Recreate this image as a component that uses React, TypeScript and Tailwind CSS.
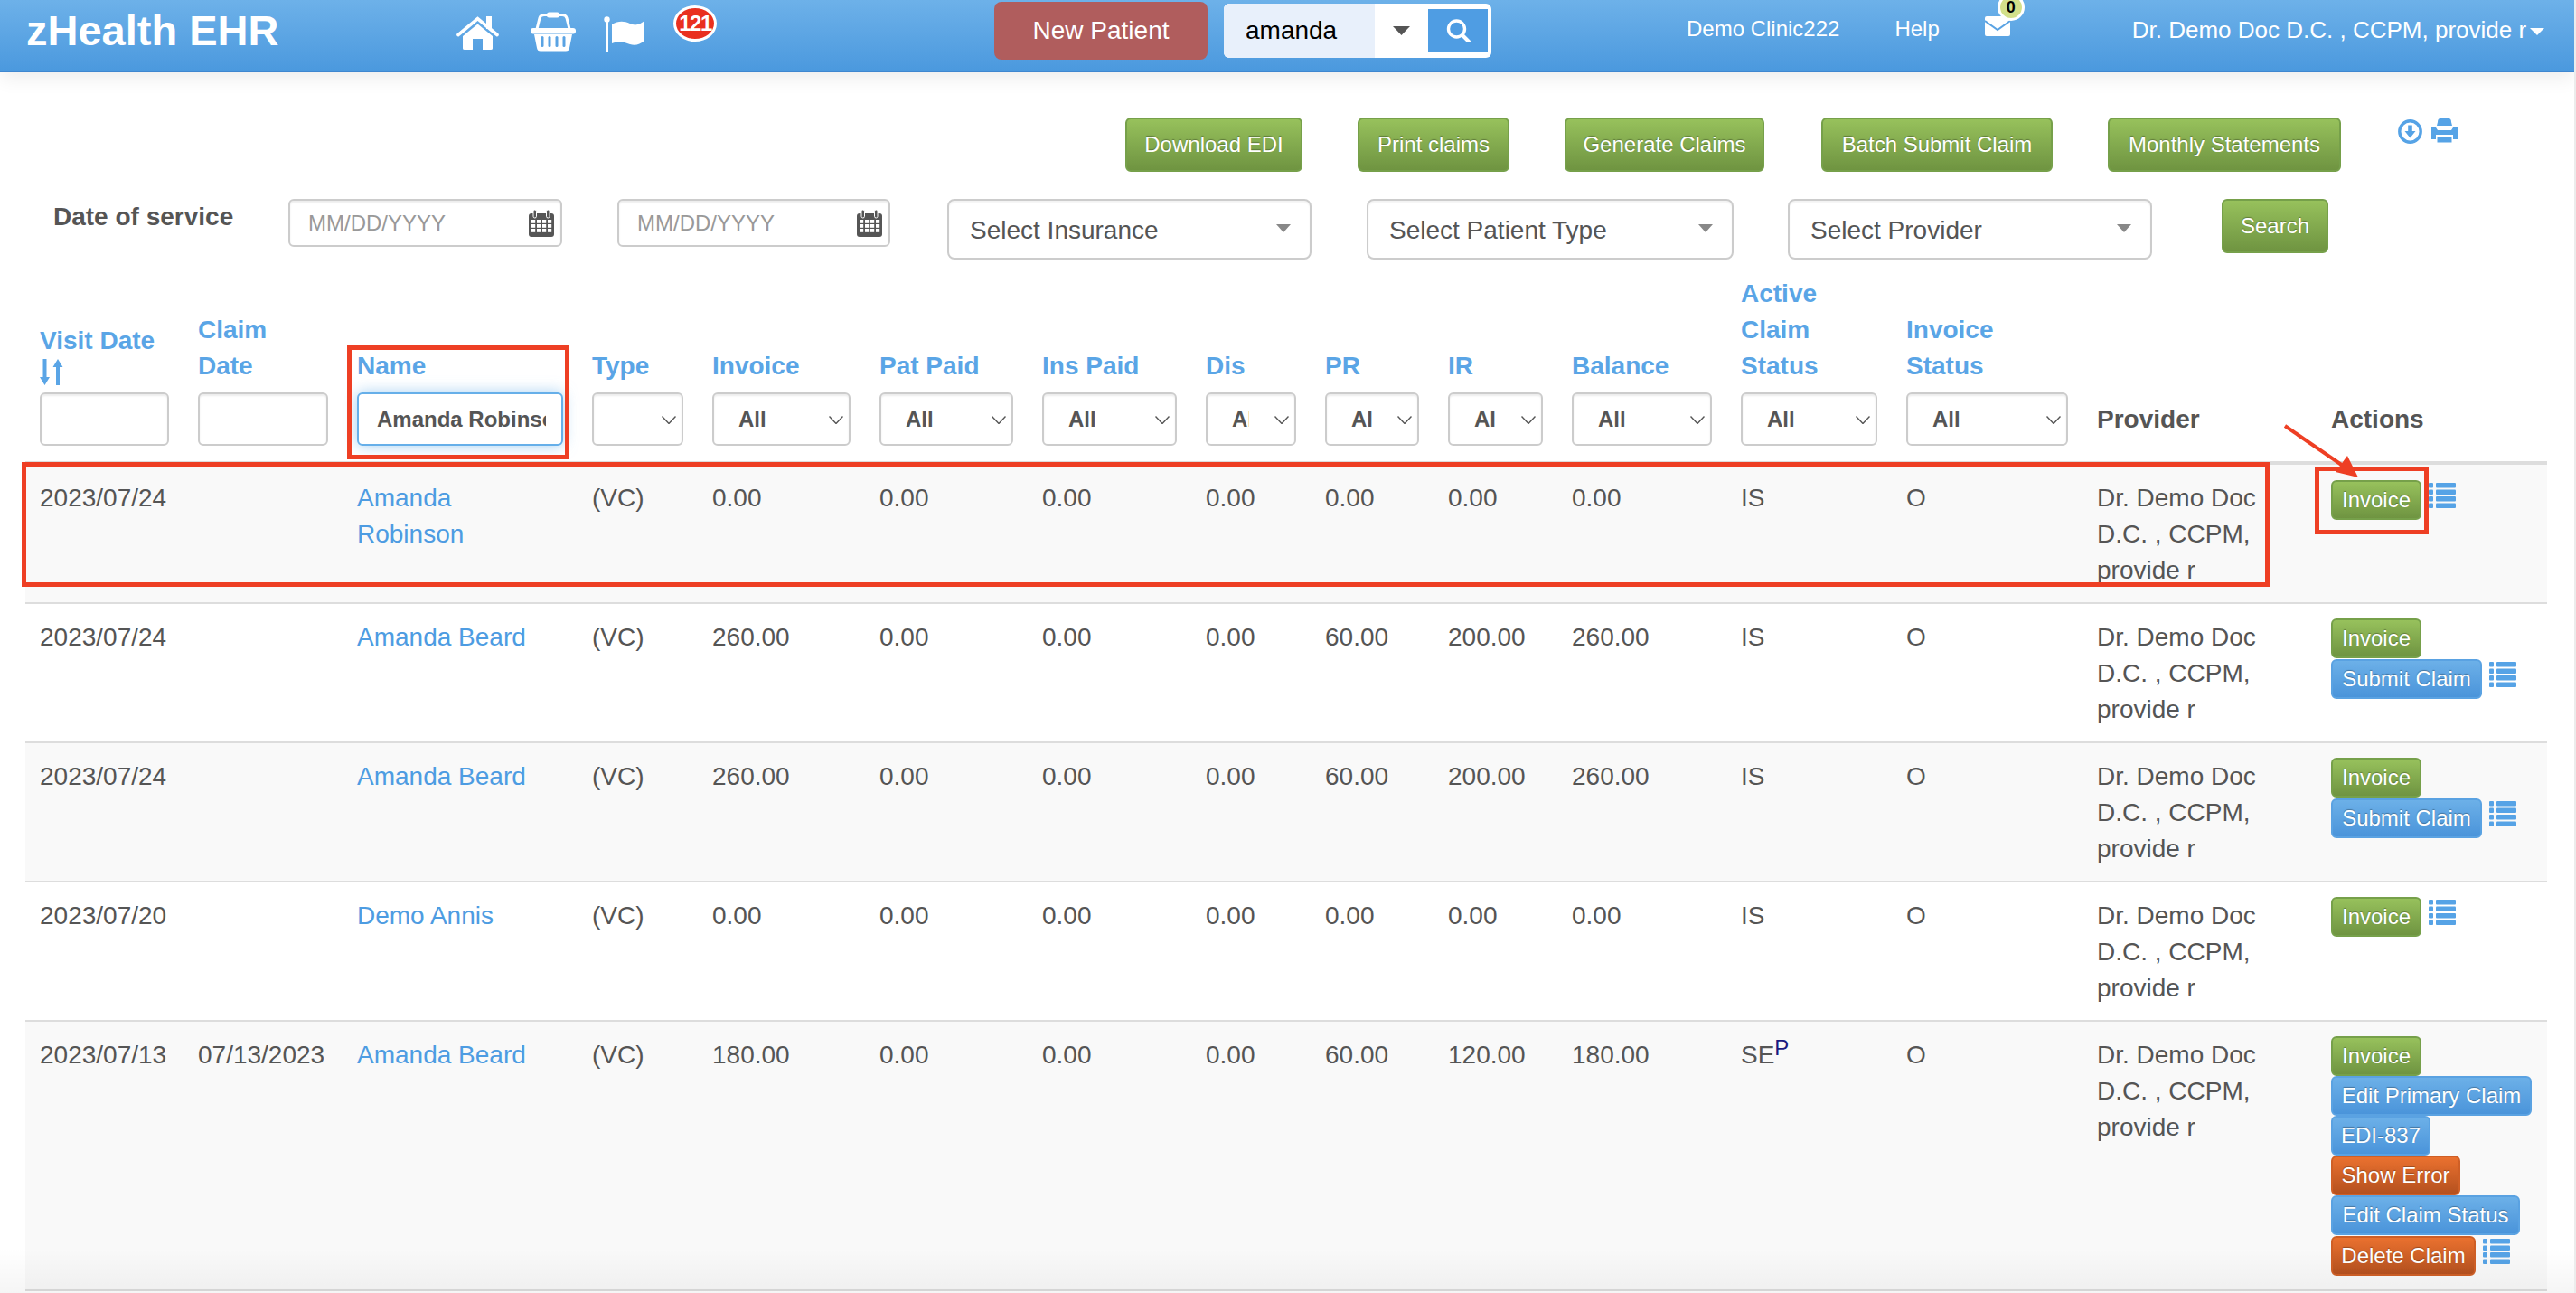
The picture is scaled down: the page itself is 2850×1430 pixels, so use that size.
import React from 'react';

const green = 'bg-linear-to-b from-[#97c15c] to-[#6f9441] border-[#76a04a]';
const blue = 'bg-linear-to-b from-[#6cb0e8] to-[#4a94da] border-[#5aa2e2]';
const orange = 'bg-linear-to-b from-[#ea712f] to-[#b5511f] border-[#cf5f26]';

function Btn({ color, label, className = '' }: { color: string; label: string; className?: string }) {
  return (
    <button
      className={`shrink-0 rounded-[6px] border-2 text-white text-[24px] leading-none whitespace-nowrap [text-shadow:0_-1px_1px_rgba(0,0,0,0.3)] ${color} ${className}`}
    >
      {label}
    </button>
  );
}

function ListIcon() {
  return (
    <svg width="30" height="28" viewBox="0 0 30 28" fill="#56a3e6" className="shrink-0 mt-[3px]">
      <rect x="0" y="0" width="5" height="5.5" rx="1" />
      <rect x="8" y="0" width="22" height="5.5" rx="1" />
      <rect x="0" y="7.5" width="5" height="5.5" rx="1" />
      <rect x="8" y="7.5" width="22" height="5.5" rx="1" />
      <rect x="0" y="15" width="5" height="5.5" rx="1" />
      <rect x="8" y="15" width="22" height="5.5" rx="1" />
      <rect x="0" y="22.5" width="5" height="5.5" rx="1" />
      <rect x="8" y="22.5" width="22" height="5.5" rx="1" />
    </svg>
  );
}

function CalendarIcon() {
  return (
    <svg width="28" height="30" viewBox="0 0 28 30" className="absolute right-[9px] top-[12px]">
      <rect x="0" y="4" width="28" height="26" rx="3" fill="#555" />
      <rect x="5" y="0" width="3.5" height="9" rx="1.7" fill="#555" stroke="#fff" strokeWidth="1" />
      <rect x="19.5" y="0" width="3.5" height="9" rx="1.7" fill="#555" stroke="#fff" strokeWidth="1" />
      <g fill="#fff">
        {[3, 9, 15, 21].map((x) =>
          [11, 16, 21].map((y) => <rect key={`${x}-${y}`} x={x} y={y} width="4.2" height="3.8" />),
        )}
      </g>
    </svg>
  );
}

function DateInput({ className = '' }: { className?: string }) {
  return (
    <div className={`relative h-[53px] shrink-0 ${className}`}>
      <input
        placeholder="MM/DD/YYYY"
        className="w-full h-full border-2 border-[#ccc] rounded-[6px] pl-[20px] text-[24px] text-[#555] placeholder:text-[#999] shadow-[inset_0_2px_2px_rgba(0,0,0,0.075)] outline-none"
      />
      <CalendarIcon />
    </div>
  );
}

function FakeSelect({ label, className = '' }: { label: string; className?: string }) {
  return (
    <div
      className={`h-[67px] shrink-0 flex items-center justify-between border-2 border-[#ccc] rounded-[8px] pl-[23px] pr-[21px] text-[28px] text-[#555] shadow-[inset_0_2px_2px_rgba(0,0,0,0.05)] ${className}`}
    >
      <span className="pt-[2px]">{label}</span>
      <svg width="16" height="9" viewBox="0 0 16 9" className="mb-[2px]">
        <path d="M0 0H16L8 9Z" fill="#888" />
      </svg>
    </div>
  );
}

function FilterSelect({ value = 'All' }: { value?: string }) {
  return (
    <div className="relative h-[59px] w-full">
      <select
        defaultValue={value}
        className="appearance-none w-full h-full bg-white border-2 border-[#ccc] rounded-[6px] pl-[27px] pr-[50px] text-[24px] font-bold text-[#555] shadow-[inset_0_2px_2px_rgba(0,0,0,0.075)] outline-none"
      >
        <option value={value}>{value}</option>
      </select>
      <svg width="16" height="9" viewBox="0 0 16 9" className="absolute right-[8px] top-[26px] pointer-events-none">
        <path d="M0.5 0.5L8 8.5L15.5 0.5" fill="none" stroke="#555" strokeWidth="1.4" />
      </svg>
    </div>
  );
}

function TextFilter({ value, focused }: { value?: string; focused?: boolean }) {
  return (
    <input
      readOnly
      value={value ?? ''}
      className={`block w-full h-[59px] bg-white rounded-[6px] border-2 pl-[20px] pr-[17px] text-[24px] font-bold text-[#555] outline-none ${
        focused
          ? 'border-[#66afe9] shadow-[0_0_16px_rgba(102,175,233,0.6)]'
          : 'border-[#ccc] shadow-[inset_0_2px_2px_rgba(0,0,0,0.075)]'
      }`}
    />
  );
}

function HeadLabel({ lines }: { lines: string[] }) {
  return (
    <div className="mb-[9px] text-[#5aa5e6] font-bold text-[28px] leading-[40px]">
      {lines.map((l) => (
        <div key={l}>{l}</div>
      ))}
    </div>
  );
}

const selectCols = [
  { lines: ['Type'], value: '' },
  { lines: ['Invoice'] },
  { lines: ['Pat Paid'] },
  { lines: ['Ins Paid'] },
  { lines: ['Dis'] },
  { lines: ['PR'] },
  { lines: ['IR'] },
  { lines: ['Balance'] },
  { lines: ['Active', 'Claim', 'Status'] },
  { lines: ['Invoice', 'Status'] },
];

type Action = { label: string; color: string; w: string };
const invoice: Action = { label: 'Invoice', color: green, w: 'w-[100px]' };
const submit: Action = { label: 'Submit Claim', color: blue, w: 'w-[167px]' };

type Row = {
  visit: string;
  claim: string;
  name: string;
  inv: string;
  pr: string;
  ir: string;
  bal: string;
  status: string;
  sup?: boolean;
  actions: Action[];
};

const rows: Row[] = [
  { visit: '2023/07/24', claim: '', name: 'Amanda Robinson', inv: '0.00', pr: '0.00', ir: '0.00', bal: '0.00', status: 'IS', actions: [invoice] },
  { visit: '2023/07/24', claim: '', name: 'Amanda Beard', inv: '260.00', pr: '60.00', ir: '200.00', bal: '260.00', status: 'IS', actions: [invoice, submit] },
  { visit: '2023/07/24', claim: '', name: 'Amanda Beard', inv: '260.00', pr: '60.00', ir: '200.00', bal: '260.00', status: 'IS', actions: [invoice, submit] },
  { visit: '2023/07/20', claim: '', name: 'Demo Annis', inv: '0.00', pr: '0.00', ir: '0.00', bal: '0.00', status: 'IS', actions: [invoice] },
  {
    visit: '2023/07/13',
    claim: '07/13/2023',
    name: 'Amanda Beard',
    inv: '180.00',
    pr: '60.00',
    ir: '120.00',
    bal: '180.00',
    status: 'SE',
    sup: true,
    actions: [
      invoice,
      { label: 'Edit Primary Claim', color: blue, w: 'w-[222px]' },
      { label: 'EDI-837', color: blue, w: 'w-[110px]' },
      { label: 'Show Error', color: orange, w: 'w-[143px]' },
      { label: 'Edit Claim Status', color: blue, w: 'w-[209px]' },
      { label: 'Delete Claim', color: orange, w: 'w-[160px]' },
    ],
  },
];

function Nav() {
  return (
    <header className="h-[80px] flex bg-linear-to-b from-[#6db1e9] to-[#4b99de] border-b-2 border-[#3f87d0] shadow-[0_6px_20px_rgba(0,0,0,0.08)] text-white">
      <div className="w-[505px] shrink-0 pl-[29px] pt-[9px] text-[47px] font-bold leading-[50px]">zHealth EHR</div>
      <svg width="47" height="39" viewBox="0 0 47 39" className="mt-[17px] shrink-0">
        <rect x="33" y="1" width="6" height="14" fill="#fff" />
        <path d="M2 21.5L23.5 3.5L45 21.5" fill="none" stroke="#fff" strokeWidth="3.6" strokeLinecap="round" />
        <path d="M23.5 9.5L40 23V36.5Q40 38 38 38H29V26H18V38H9Q7 38 7 36.5V23Z" fill="#fff" />
      </svg>
      <svg width="50" height="44" viewBox="0 0 50 44" className="ml-[35px] mt-[13px] shrink-0">
        <path d="M7 19L10 7Q11 3.5 15 3.5H35Q39 3.5 40 7L43 19" fill="none" stroke="#fff" strokeWidth="3" />
        <rect x="18" y="0.5" width="14" height="6" rx="2.5" fill="#fff" />
        <rect x="0" y="18" width="50" height="6.5" rx="3" fill="#fff" />
        <path d="M4 25H46L43 40Q42.5 43.5 39 43.5H11Q7.5 43.5 7 40Z" fill="#fff" />
        <g fill="#5aa3e3">
          <rect x="11.5" y="27" width="3" height="12" rx="1.5" />
          <rect x="19.5" y="27" width="3" height="12" rx="1.5" />
          <rect x="27.5" y="27" width="3" height="12" rx="1.5" />
          <rect x="35.5" y="27" width="3" height="12" rx="1.5" />
        </g>
      </svg>
      <svg width="46" height="40" viewBox="0 0 46 40" className="ml-[31px] mt-[18px] shrink-0">
        <circle cx="3.5" cy="3.5" r="3.2" fill="#fff" />
        <rect x="2" y="4" width="3" height="36" rx="1.5" fill="#fff" />
        <path d="M9 9C16 5 22 5 29 8C35 11 40 9 45 5V27C40 31 35 33 29 31C22 28 16 27 9 30Z" fill="#fff" />
      </svg>
      <div className="ml-[31px] mt-[6px] shrink-0 w-[48px] h-[40px] rounded-[50%] border-[3px] border-white bg-[#e9301f] flex items-center justify-center text-[24px] font-bold tracking-[-1.5px]">
        121
      </div>
      <button className="ml-[307px] mt-[2px] shrink-0 w-[236px] h-[64px] rounded-[8px] bg-[#b05d5d] text-[28px] text-white">
        New Patient
      </button>
      <div className="ml-[18px] mt-[4px] shrink-0 w-[296px] h-[60px] rounded-[6px] bg-white flex overflow-hidden">
        <div className="w-[167px] bg-[#e8f0fb] pl-[24px] text-[28px] leading-[60px] text-black">amanda</div>
        <svg width="19" height="10" viewBox="0 0 19 10" className="ml-[20px] mt-[25px]">
          <path d="M0 0H19L9.5 10Z" fill="#555" />
        </svg>
        <div className="ml-[20px] mt-[6px] w-[66px] h-[48px] bg-[#4f9de3] flex items-center justify-center">
          <svg width="27" height="26" viewBox="0 0 27 26" fill="none" stroke="#fff">
            <circle cx="11.5" cy="11" r="9" strokeWidth="3.4" />
            <path d="M18 18L25 25" strokeWidth="4" strokeLinecap="round" />
          </svg>
        </div>
      </div>
      <div className="ml-[216px] mt-[18px] shrink-0 text-[24px] leading-[28px]">Demo Clinic222</div>
      <div className="ml-[61px] mt-[18px] shrink-0 text-[24px] leading-[28px]">Help</div>
      <div className="relative ml-[50px] mt-[18px] w-[28px] h-[22px] shrink-0">
        <svg width="28" height="22" viewBox="0 0 28 22">
          <rect width="28" height="22" rx="2" fill="#fff" />
          <path d="M0 5L14 15L28 5" fill="none" stroke="#5aa3e3" strokeWidth="2" />
        </svg>
        <div className="absolute left-[14px] top-[-25px] w-[30px] h-[30px] rounded-full bg-[#d3e08a] border-[3px] border-white flex items-center justify-center text-[18px] font-bold text-black">
          0
        </div>
      </div>
      <div className="ml-[135px] mt-[18px] shrink-0 text-[26px] leading-[30px] whitespace-nowrap">Dr. Demo Doc D.C. , CCPM, provide r</div>
      <svg width="16" height="8" viewBox="0 0 16 8" className="ml-[4px] mt-[31px] shrink-0">
        <path d="M0 0H16L8 8Z" fill="#fff" />
      </svg>
    </header>
  );
}

function Filters() {
  return (
    <section>
      <div className="flex pt-[50px] ml-[1245px]">
        <Btn color={green} label="Download EDI" className="w-[196px] h-[60px]" />
        <Btn color={green} label="Print claims" className="ml-[61px] w-[168px] h-[60px]" />
        <Btn color={green} label="Generate Claims" className="ml-[61px] w-[221px] h-[60px]" />
        <Btn color={green} label="Batch Submit Claim" className="ml-[63px] w-[256px] h-[60px]" />
        <Btn color={green} label="Monthly Statements" className="ml-[61px] w-[258px] h-[60px]" />
        <svg width="27" height="27" viewBox="0 0 27 27" className="ml-[63px] mt-[2px] shrink-0">
          <circle cx="13.5" cy="13.5" r="11.7" fill="none" stroke="#56a3e6" strokeWidth="3.4" />
          <path d="M11.2 6.5H15.8V13H19.5L13.5 20.5L7.5 13H11.2Z" fill="#56a3e6" />
        </svg>
        <svg width="29" height="27" viewBox="0 0 29 27" className="ml-[10px] mt-[1px] shrink-0" fill="#56a3e6">
          <path d="M7 4Q7 0 10 0H19Q22 0 22 4L23 8H6Z" />
          <path d="M0 10H5L7 13H22L24 10H29V23H24V18H5V23H0Z" />
          <rect x="6.5" y="20.5" width="16" height="6" />
        </svg>
      </div>
      <div className="flex pt-[30px] pl-[59px]">
        <div className="w-[260px] shrink-0 text-[28px] font-bold leading-[40px] text-[#555]">Date of service</div>
        <DateInput className="w-[303px]" />
        <DateInput className="ml-[61px] w-[302px]" />
        <FakeSelect label="Select Insurance" className="ml-[63px] w-[403px]" />
        <FakeSelect label="Select Patient Type" className="ml-[61px] w-[406px]" />
        <FakeSelect label="Select Provider" className="ml-[60px] w-[403px]" />
        <Btn color={green} label="Search" className="ml-[77px] w-[118px] h-[60px]" />
      </div>
    </section>
  );
}

function ClaimsTable() {
  const th = 'px-4 pt-4 pb-[17px] align-bottom text-left font-normal border-b-4 border-[#ddd]';
  const plain = 'px-4 pb-[26px] align-bottom text-left font-bold text-[28px] leading-[40px] text-[#555] border-b-4 border-[#ddd]';

  return (
    <table className="mt-[2px] ml-[28px] w-[2790px] table-fixed border-separate border-spacing-0 text-[28px] leading-[40px] text-[#555]">
      <colgroup>
        <col className="w-[175px]" />
        <col className="w-[176px]" />
        <col className="w-[260px]" />
        <col className="w-[133px]" />
        <col className="w-[185px]" />
        <col className="w-[180px]" />
        <col className="w-[181px]" />
        <col className="w-[132px]" />
        <col className="w-[136px]" />
        <col className="w-[137px]" />
        <col className="w-[187px]" />
        <col className="w-[183px]" />
        <col className="w-[211px]" />
        <col className="w-[259px]" />
        <col className="w-[255px]" />
      </colgroup>
      <thead>
        <tr>
          <th className={th}>
            <div className="text-[#5aa5e6] font-bold text-[28px] leading-[40px]">Visit Date</div>
            <svg width="26" height="29" viewBox="0 0 26 29" className="mb-[8px]" fill="#5aa5e6">
              <path d="M3.5 0H7.5V20H11L5.5 29L0 20H3.5Z" />
              <path d="M18 9H14.5L20 0L25.5 9H22V29H18Z" />
            </svg>
            <TextFilter />
          </th>
          <th className={th}>
            <HeadLabel lines={['Claim', 'Date']} />
            <TextFilter />
          </th>
          <th className={th}>
            <HeadLabel lines={['Name']} />
            <TextFilter value="Amanda Robinson" focused />
          </th>
          {selectCols.map((c) => (
            <th key={c.lines.join(' ')} className={th}>
              <HeadLabel lines={c.lines} />
              <FilterSelect value={c.value} />
            </th>
          ))}
          <th className={plain}>Provider</th>
          <th className={plain}>Actions</th>
        </tr>
      </thead>
      <tbody>
        {rows.map((r, i) => {
          const bg = i % 2 === 0 ? 'bg-[#f9f9f9]' : 'bg-white';
          const cell = `px-4 pt-[17px] pb-[15px] align-top ${bg} ${i > 0 ? 'border-t-2 border-[#ddd]' : ''} ${
            i === rows.length - 1 ? 'border-b-2 border-b-[#ddd]' : ''
          }`;
          return (
            <tr key={i}>
              <td className={cell}>{r.visit}</td>
              <td className={cell}>{r.claim}</td>
              <td className={cell}>
                <a className="text-[#4d9ce2]">{r.name}</a>
              </td>
              <td className={cell}>(VC)</td>
              <td className={cell}>{r.inv}</td>
              <td className={cell}>0.00</td>
              <td className={cell}>0.00</td>
              <td className={cell}>0.00</td>
              <td className={cell}>{r.pr}</td>
              <td className={cell}>{r.ir}</td>
              <td className={cell}>{r.bal}</td>
              <td className={cell}>
                {r.status}
                {r.sup && <sup className="text-[24px] text-[#1a1a80] -top-[9px]">P</sup>}
              </td>
              <td className={cell}>O</td>
              <td className={cell}>Dr. Demo Doc D.C. , CCPM, provide r</td>
              <td className={cell}>
                <div className={`flex flex-col items-start ${i === 0 ? '' : '-mt-px'}`}>
                  {r.actions.map((a, j) => {
                    const last = j === r.actions.length - 1;
                    return (
                      <div key={a.label} className={`flex gap-[8px] ${last && j > 0 ? 'mt-px' : ''}`}>
                        <Btn color={a.color} label={a.label} className={`${a.w} h-[44px]`} />
                        {last && <ListIcon />}
                      </div>
                    );
                  })}
                </div>
              </td>
            </tr>
          );
        })}
      </tbody>
    </table>
  );
}

export default function App() {
  return (
    <div className="relative w-[2850px] h-[1430px] overflow-hidden bg-white border-r-2 border-[#ececec] font-['Liberation_Sans',Arial,sans-serif]">
      <Nav />
      <Filters />
      <ClaimsTable />

      {/* annotations on top of the page */}
      <div className="absolute left-[384px] top-[382px] w-[246px] h-[126px] border-[5px] border-[#ee3f24] pointer-events-none" />
      <div className="absolute left-[24px] top-[511px] w-[2487px] h-[138px] border-[5px] border-[#ee3f24] pointer-events-none" />
      <div className="absolute left-[2561px] top-[516px] w-[126px] h-[75px] border-[5px] border-[#ee3f24] pointer-events-none" />
      <svg width="100" height="70" viewBox="2520 465 100 70" className="absolute left-[2520px] top-[465px] pointer-events-none">
        <line x1="2528" y1="471" x2="2592" y2="515" stroke="#ee3f24" strokeWidth="4" />
        <path d="M2609 528L2597 504L2584 522Z" fill="#ee3f24" />
      </svg>
      <div className="absolute left-0 right-0 bottom-0 h-[50px] bg-linear-to-b from-transparent to-[rgba(0,0,0,0.04)] pointer-events-none" />
    </div>
  );
}
